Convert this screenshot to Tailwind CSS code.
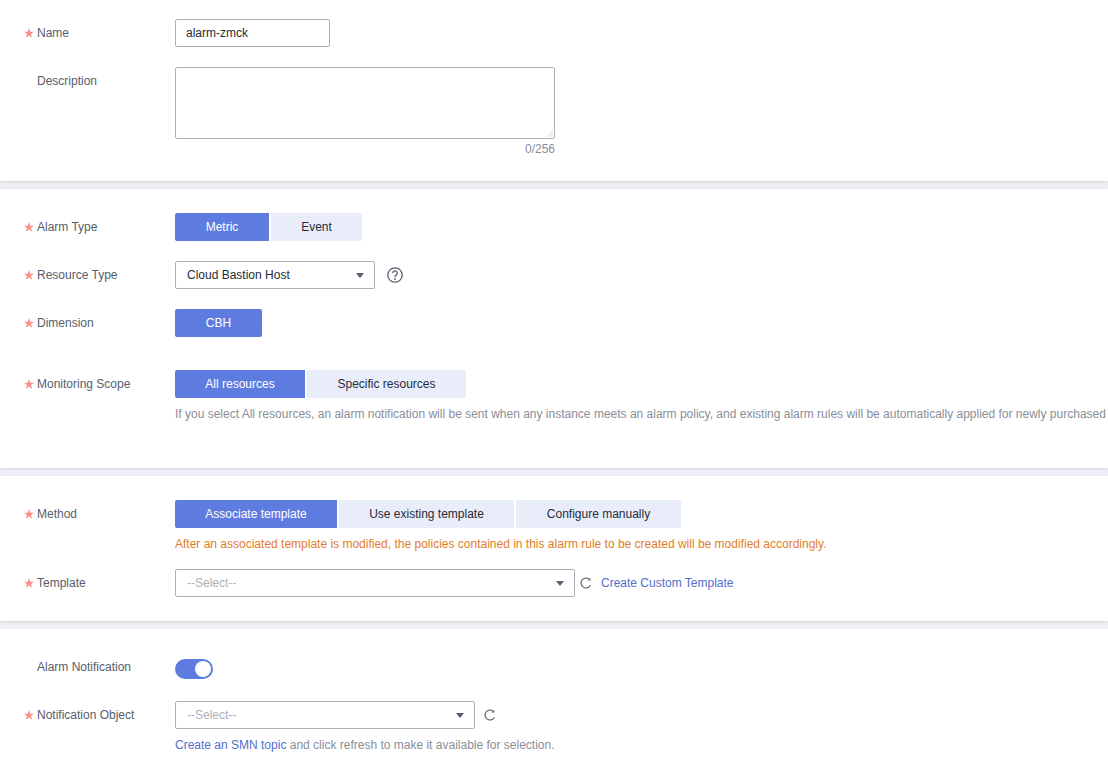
<!doctype html>
<html lang="en">
    <head>
        <meta charset="utf-8">
        <title>Create Alarm Rule</title>
        <script src="https://cdn.jsdelivr.net/npm/@tailwindcss/browser@4"></script>
    </head>
    <body class="h-[768px] w-[1108px] overflow-hidden bg-[#eef0f5] font-['Liberation_Sans',Arial,sans-serif] text-xs text-[#252b3a]">

        <!-- Name -->
        <section class="h-[181px] bg-white pt-[19px] shadow-[0_1px_3px_rgba(0,0,0,0.12)]">
            <div class="flex h-7">
                <div class="flex w-[175px] items-center whitespace-nowrap text-[#575d6c]">
                    <span class="w-[37px] pl-6"><svg width="10" height="10" viewBox="0 0 8 8"><path d="M4 0 5 2.900H8L5.600 4.700 6.500 7.800 4 6 1.500 7.800 2.400 4.700 0 2.900H3z" fill="#f88f8a"/></svg></span>Name
                </div>
                <div class="flex h-7 w-[155px] items-center rounded-[2px] border border-[#adb0b8] bg-white px-2.5">alarm-zmck</div>
            </div>
            <div class="mt-5 flex">
                <div class="flex h-7 w-[175px] items-center text-[#575d6c]">
                    <span class="w-[37px]"></span>Description
                </div>
                <div class="w-[380px]">
                    <div class="relative h-[72px] rounded-[2px] border border-[#adb0b8] bg-white">
                        <svg class="absolute right-0 bottom-0" width="8" height="8" viewBox="0 0 8 8"><path d="M1 7 7 1M4 7 7 4" stroke="#c4c6cc" stroke-width="0.8" fill="none"/></svg>
                    </div>
                    <div class="mt-1 text-right leading-[12px] text-[#8a8e99]">0/256</div>
                </div>
            </div>
        </section>

        <!-- Alarm type, resource -->
        <section class="mt-2 h-[279px] bg-white pt-6 shadow-[0_1px_3px_rgba(0,0,0,0.12)]">
            <div class="flex h-7">
                <div class="flex w-[175px] items-center text-[#575d6c]">
                    <span class="w-[37px] pl-6"><svg width="10" height="10" viewBox="0 0 8 8"><path d="M4 0 5 2.900H8L5.600 4.700 6.500 7.800 4 6 1.500 7.800 2.400 4.700 0 2.900H3z" fill="#f88f8a"/></svg></span>Alarm Type
                </div>
                <div class="flex gap-0.5">
                    <div class="flex w-[94px] items-center justify-center rounded-l-[2px] bg-[#5e7ce0] text-white">Metric</div>
                    <div class="flex w-[91px] items-center justify-center rounded-r-[2px] bg-[#e9edfa]">Event</div>
                </div>
            </div>
            <div class="mt-5 flex h-7">
                <div class="flex w-[175px] items-center text-[#575d6c]">
                    <span class="w-[37px] pl-6"><svg width="10" height="10" viewBox="0 0 8 8"><path d="M4 0 5 2.900H8L5.600 4.700 6.500 7.800 4 6 1.500 7.800 2.400 4.700 0 2.900H3z" fill="#f88f8a"/></svg></span>Resource Type
                </div>
                <div class="flex w-[200px] items-center justify-between rounded-[2px] border border-[#adb0b8] bg-white pr-[10px] pl-[11px]">
                    <span>Cloud Bastion Host</span>
                    <svg width="8" height="5" viewBox="0 0 8 5"><path d="M0 0h8L4 5z" fill="#575d6c"/></svg>
                </div>
                <svg class="mt-[6px] ml-3" width="16" height="16" viewBox="0 0 16 16" fill="none">
                    <circle cx="8" cy="8" r="7.200" stroke="#575d6c" stroke-width="1.300"/>
                    <path d="M5.700 6.200a2.300 2.300 0 1 1 3.500 1.900c-.8.500-1.200.9-1.200 1.900" stroke="#575d6c" stroke-width="1.300"/>
                    <circle cx="8" cy="12" r="0.900" fill="#575d6c"/>
                </svg>
            </div>
            <div class="mt-5 flex h-7">
                <div class="flex w-[175px] items-center text-[#575d6c]">
                    <span class="w-[37px] pl-6"><svg width="10" height="10" viewBox="0 0 8 8"><path d="M4 0 5 2.900H8L5.600 4.700 6.500 7.800 4 6 1.500 7.800 2.400 4.700 0 2.900H3z" fill="#f88f8a"/></svg></span>Dimension
                </div>
                <div class="flex w-[87px] items-center justify-center rounded-[2px] bg-[#5e7ce0] text-white">CBH</div>
            </div>
            <div class="mt-[33px] flex h-7">
                <div class="flex w-[175px] items-center text-[#575d6c]">
                    <span class="w-[37px] pl-6"><svg width="10" height="10" viewBox="0 0 8 8"><path d="M4 0 5 2.900H8L5.600 4.700 6.500 7.800 4 6 1.500 7.800 2.400 4.700 0 2.900H3z" fill="#f88f8a"/></svg></span>Monitoring Scope
                </div>
                <div class="flex gap-0.5">
                    <div class="flex w-[130px] items-center justify-center rounded-l-[2px] bg-[#5e7ce0] text-white">All resources</div>
                    <div class="flex w-[159px] items-center justify-center rounded-r-[2px] bg-[#e9edfa]">Specific resources</div>
                </div>
            </div>
            <p class="mt-[9px] ml-[175px] whitespace-nowrap leading-[15px] text-[#8a8e99]">If you select All resources, an alarm notification will be sent when any instance meets an alarm policy, and existing alarm rules will be automatically applied for newly purchased</p>
        </section>

        <!-- Method -->
        <section class="mt-2 h-[145px] bg-white pt-6 shadow-[0_1px_3px_rgba(0,0,0,0.12)]">
            <div class="flex h-7">
                <div class="flex w-[175px] items-center text-[#575d6c]">
                    <span class="w-[37px] pl-6"><svg width="10" height="10" viewBox="0 0 8 8"><path d="M4 0 5 2.900H8L5.600 4.700 6.500 7.800 4 6 1.500 7.800 2.400 4.700 0 2.900H3z" fill="#f88f8a"/></svg></span>Method
                </div>
                <div class="flex gap-0.5">
                    <div class="flex w-[162px] items-center justify-center rounded-l-[2px] bg-[#5e7ce0] text-white">Associate template</div>
                    <div class="flex w-[175px] items-center justify-center bg-[#e9edfa]">Use existing template</div>
                    <div class="flex w-[165px] items-center justify-center rounded-r-[2px] bg-[#e9edfa]">Configure manually</div>
                </div>
            </div>
            <p class="mt-[9px] ml-[175px] leading-[15px] text-[#e37d29]">After an associated template is modified, the policies contained in this alarm rule to be created will be modified accordingly.</p>
            <div class="mt-[17px] flex h-7">
                <div class="flex w-[175px] items-center text-[#575d6c]">
                    <span class="w-[37px] pl-6"><svg width="10" height="10" viewBox="0 0 8 8"><path d="M4 0 5 2.900H8L5.600 4.700 6.500 7.800 4 6 1.500 7.800 2.400 4.700 0 2.900H3z" fill="#f88f8a"/></svg></span>Template
                </div>
                <div class="flex w-[400px] items-center justify-between rounded-[2px] border border-[#adb0b8] bg-white pr-[10px] pl-[11px]">
                    <span class="text-[#adb0b8]">--Select--</span>
                    <svg width="8" height="5" viewBox="0 0 8 5"><path d="M0 0h8L4 5z" fill="#575d6c"/></svg>
                </div>
                <svg class="mt-2 ml-[5px]" width="12" height="12" viewBox="0 0 12 12" fill="none">
                    <path d="M10.500 8.300A5 5 0 1 1 9.800 2.700" stroke="#575d6c" stroke-width="1.100"/>
                    <path d="M10.300 0.900v2.700H7.700z" fill="#575d6c"/>
                </svg>
                <a class="ml-[9px] flex items-center text-[#526ecc]">Create Custom Template</a>
            </div>
        </section>

        <!-- Notification -->
        <section class="mt-2 h-[139px] bg-white pt-[30px]">
            <div class="flex h-5">
                <div class="flex w-[175px] items-start text-[#575d6c]">
                    <span class="w-[37px]"></span>Alarm Notification
                </div>
                <div class="flex h-5 w-[38px] items-center justify-end rounded-full bg-[#5e7ce0] pr-0.5">
                    <div class="size-4 rounded-full bg-white"></div>
                </div>
            </div>
            <div class="mt-[22px] flex h-7">
                <div class="flex w-[175px] items-center text-[#575d6c]">
                    <span class="w-[37px] pl-6"><svg width="10" height="10" viewBox="0 0 8 8"><path d="M4 0 5 2.900H8L5.600 4.700 6.500 7.800 4 6 1.500 7.800 2.400 4.700 0 2.900H3z" fill="#f88f8a"/></svg></span>Notification Object
                </div>
                <div class="flex w-[300px] items-center justify-between rounded-[2px] border border-[#adb0b8] bg-white pr-[10px] pl-[11px]">
                    <span class="text-[#adb0b8]">--Select--</span>
                    <svg width="8" height="5" viewBox="0 0 8 5"><path d="M0 0h8L4 5z" fill="#575d6c"/></svg>
                </div>
                <svg class="mt-2 ml-[9px]" width="12" height="12" viewBox="0 0 12 12" fill="none">
                    <path d="M10.500 8.300A5 5 0 1 1 9.800 2.700" stroke="#575d6c" stroke-width="1.100"/>
                    <path d="M10.300 0.900v2.700H7.700z" fill="#575d6c"/>
                </svg>
            </div>
            <p class="mt-[9px] ml-[175px] leading-[15px] text-[#8a8e99]"><a class="text-[#526ecc]">Create an SMN topic</a> and click refresh to make it available for selection.</p>
        </section>
    </body>
</html>
